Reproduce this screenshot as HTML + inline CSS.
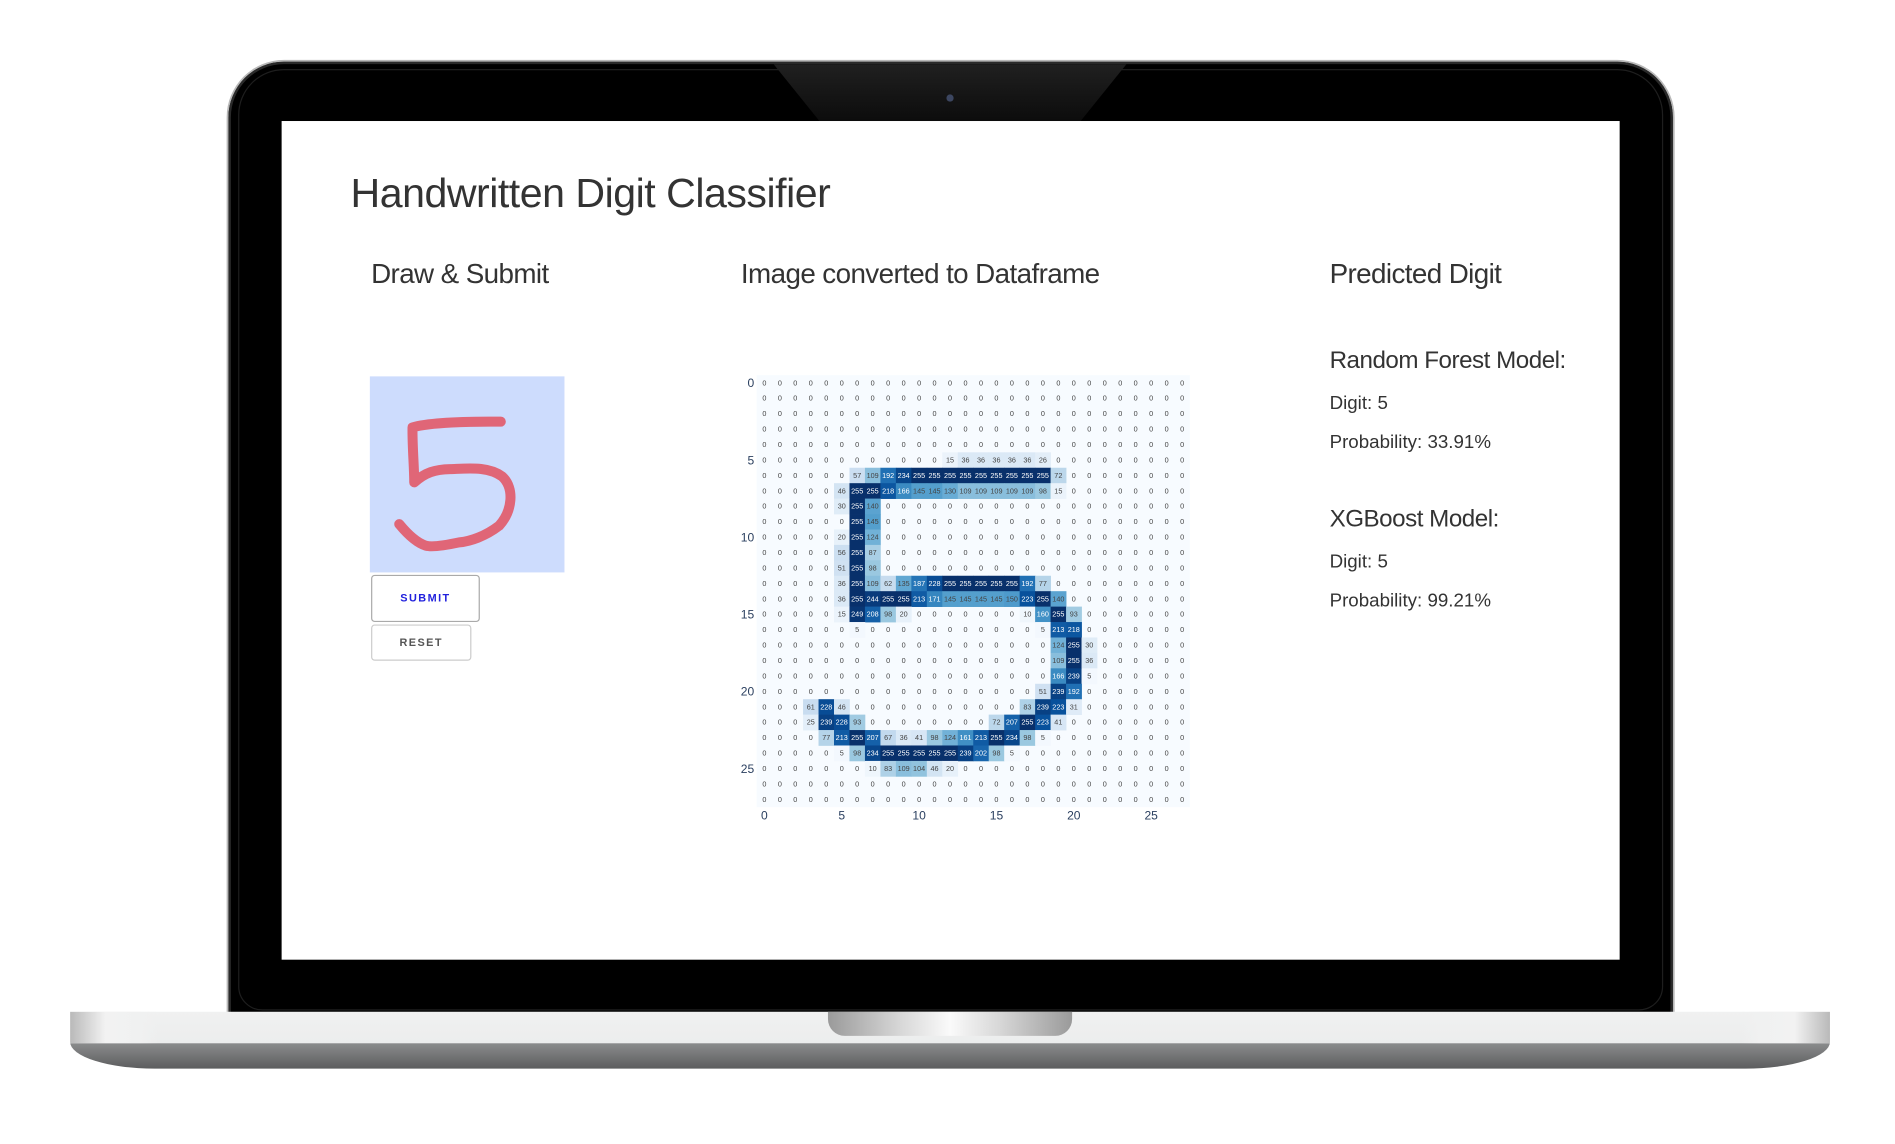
<!DOCTYPE html>
<html><head><meta charset="utf-8"><style>
html,body{margin:0;padding:0;background:#fff;width:1895px;height:1139px;overflow:hidden}
#w{position:absolute;left:0;top:0;width:1570px;height:945px;transform:scale(1.2087,1.2102);transform-origin:0 0;font-family:"Liberation Sans",sans-serif;color:#333}
.a{position:absolute;line-height:1;white-space:nowrap}
#lid{position:absolute;left:189px;top:51px;width:1195px;height:790px;background:#000;border-radius:46px 46px 0 0;box-shadow:0 0 0 1.5px #b8b8b8, inset 0 0 0 2px #2a2a2a}
#inner{position:absolute;left:8px;top:6px;right:8px;bottom:6px;border-radius:38px 38px 20px 20px;border:1px solid #1e1e1e}
#notch{position:absolute;left:640px;top:53px;width:292px;height:47px;background:linear-gradient(#202020,#0c0c0c);clip-path:polygon(0 0,100% 0,87% 100%,13% 100%)}
#cam{position:absolute;left:783px;top:78px;width:6px;height:6px;border-radius:50%;background:#3c4660}
#screen{position:absolute;left:233px;top:100px;width:1107px;height:693px;background:#fff}
#base{position:absolute;left:58px;top:836px;width:1456px;height:47px;border-radius:0 0 70px 70px/0 0 22px 22px;overflow:hidden;background:linear-gradient(#f0f1f1 0,#eceded 55%,#8a8b8c 56%,#5c5d5e 100%)}
#base:before{content:"";position:absolute;left:0;top:0;width:100%;height:26px;background:linear-gradient(90deg,#b9b9b9 0,#f2f2f2 2%,#f0f1f1 4%,transparent 5%,transparent 95%,#f0f1f1 96%,#f2f2f2 98%,#b9b9b9 100%)}
#hinge{position:absolute;left:685px;top:836px;width:202px;height:20px;border-radius:0 0 14px 14px;background:linear-gradient(90deg,#9a9a9a,#d8d8d8 30%,#fafafa 50%,#d8d8d8 70%,#9a9a9a)}
#cv{position:absolute;left:306px;top:311px;width:161px;height:162px;background:#cddcfd}
.btn{position:absolute;box-sizing:border-box;border:1px solid #bbb;border-radius:3px;background:#fff;font-size:9px;font-weight:bold;letter-spacing:1.2px;text-align:center}
#hm{position:absolute;left:600px;top:305px;width:400px;height:380px}
</style></head><body><div id="w">
<div id="lid"><div id="inner"></div></div>
<div id="notch"></div><div id="cam"></div>
<div id="screen"></div>
<div id="base"></div><div id="hinge"></div>

<div class="a" style="left:290px;top:143px;font-size:34px;letter-spacing:-0.4px">Handwritten Digit Classifier</div>
<div class="a" style="left:307px;top:215px;font-size:23px;letter-spacing:-0.5px">Draw &amp; Submit</div>
<div class="a" style="left:613px;top:215px;font-size:23px;letter-spacing:-0.5px">Image converted to Dataframe</div>
<div class="a" style="left:1100px;top:215px;font-size:23px;letter-spacing:-0.5px">Predicted Digit</div>
<div class="a" style="left:1100px;top:288px;font-size:20px;letter-spacing:-0.4px">Random Forest Model:</div>
<div class="a" style="left:1100px;top:326px;font-size:15.5px">Digit: 5</div>
<div class="a" style="left:1100px;top:358px;font-size:15.5px">Probability: 33.91%</div>
<div class="a" style="left:1100px;top:419px;font-size:20px;letter-spacing:-0.4px">XGBoost Model:</div>
<div class="a" style="left:1100px;top:457px;font-size:15.5px">Digit: 5</div>
<div class="a" style="left:1100px;top:489px;font-size:15.5px">Probability: 99.21%</div>

<div id="cv"><svg width="161" height="162" viewBox="0 0 194 196"><path d="M130.7 45.3 C100 45 60 46 42.3 51 C42 70 44 90 44 106 C55 96 65 93 80 92.7 C100 92 118 90 132 100 C145 112 142 135 129 149.3 C115 160 100 165 89 166 C75 169 62 171 55.7 169.3 C45 166 35 155 29 147.7" fill="none" stroke="#e06677" stroke-width="10" stroke-linecap="round" stroke-linejoin="round"/></svg></div>
<div class="btn" style="left:307px;top:475px;width:90px;height:39px;line-height:37px;color:#2222dd;border-color:#aaa">SUBMIT</div>
<div class="btn" style="left:307px;top:516px;width:83px;height:30px;line-height:28px;color:#555;border-color:#ccc">RESET</div>

<svg id="hm" viewBox="600 305 400 380"></svg>
</div>
<script>
var R={5:{12:15,13:36,14:36,15:36,16:36,17:36,18:26},
6:{6:57,7:109,8:192,9:234,10:255,11:255,12:255,13:255,14:255,15:255,16:255,17:255,18:255,19:72},
7:{5:46,6:255,7:255,8:218,9:166,10:145,11:145,12:130,13:109,14:109,15:109,16:109,17:109,18:98,19:15},
8:{5:30,6:255,7:140},9:{6:255,7:145},10:{5:20,6:255,7:124},11:{5:56,6:255,7:87},12:{5:51,6:255,7:98},
13:{5:36,6:255,7:109,8:62,9:135,10:187,11:228,12:255,13:255,14:255,15:255,16:255,17:192,18:77},
14:{5:36,6:255,7:244,8:255,9:255,10:213,11:171,12:145,13:145,14:145,15:145,16:150,17:223,18:255,19:140},
15:{5:15,6:249,7:208,8:98,9:20,17:10,18:160,19:255,20:93},
16:{6:5,18:5,19:213,20:218},17:{19:124,20:255,21:30},18:{19:109,20:255,21:36},19:{19:166,20:239,21:5},
20:{18:51,19:239,20:192},21:{3:61,4:228,5:46,17:83,18:239,19:223,20:31},
22:{3:25,4:239,5:228,6:93,15:72,16:207,17:255,18:223,19:41},
23:{4:77,5:213,6:255,7:207,8:67,9:36,10:41,11:98,12:124,13:161,14:213,15:255,16:234,17:98,18:5},
24:{5:5,6:98,7:234,8:255,9:255,10:255,11:255,12:255,13:239,14:202,15:98,16:5},
25:{7:10,8:83,9:109,10:104,11:46,12:20}};
var S=[[247,251,255],[222,235,247],[198,219,239],[158,202,225],[107,174,214],[66,146,198],[33,113,181],[8,81,156],[8,48,107]];
function col(v){var t=v/255*8,i=Math.min(7,Math.floor(t)),f=t-i,a=S[i],b=S[i+1];return "rgb("+a.map(function(x,k){return Math.round(x+(b[k]-x)*f)}).join(",")+")";}
var x0=626,y0=310,cw=12.8,ch=12.75,h='<rect x="'+x0+'" y="'+y0+'" width="'+(28*cw)+'" height="'+(28*ch)+'" fill="#f7fbff"/>';
for(var r=0;r<28;r++)for(var c=0;c<28;c++){var v=(R[r]&&R[r][c])||0;var x=x0+c*cw,y=y0+r*ch;
if(v)h+='<rect x="'+x+'" y="'+y+'" width="'+(cw+0.3)+'" height="'+(ch+0.3)+'" fill="'+col(v)+'"/>';
h+='<text x="'+(x+cw/2)+'" y="'+(y+ch/2+2)+'" font-size="6" text-anchor="middle" fill="'+(v>150?'#fff':'#444')+'" font-family="Liberation Sans,sans-serif">'+v+'</text>';}
for(var k=0;k<28;k+=5){h+='<text x="'+(x0-2)+'" y="'+(y0+k*ch+ch/2+3.5)+'" font-size="10" text-anchor="end" fill="#2a3f5f" font-family="Liberation Sans,sans-serif">'+k+'</text>';
h+='<text x="'+(x0+k*cw+cw/2)+'" y="'+(y0+28*ch+10)+'" font-size="10" text-anchor="middle" fill="#2a3f5f" font-family="Liberation Sans,sans-serif">'+k+'</text>';}
document.getElementById('hm').innerHTML=h;
</script>
</body></html>
